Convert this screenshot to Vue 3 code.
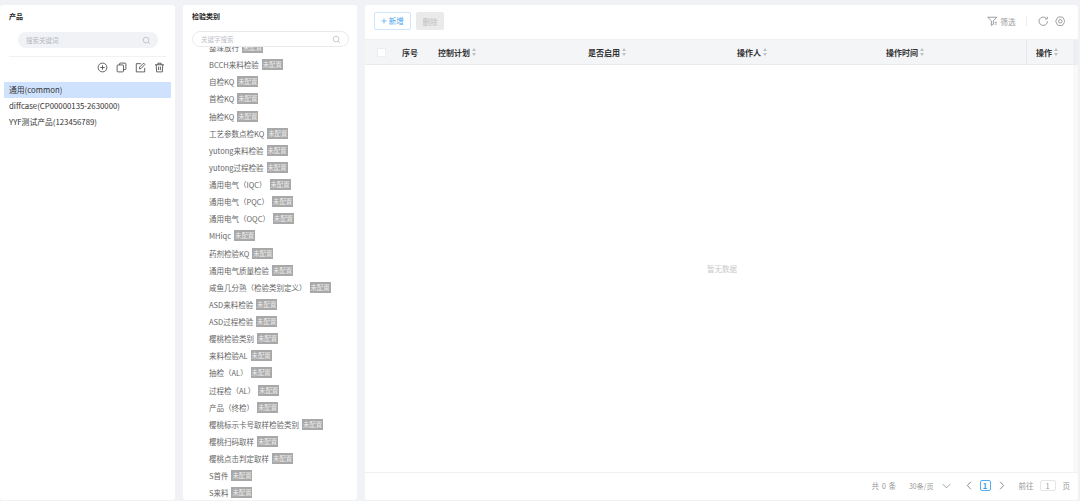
<script setup>
const products = ['通用(common)', 'diffcase(CP00000135-2630000)', 'YYF测试产品(123456789)']
const cats = [
  '整垛放行', 'BCCH来料检验', '自检KQ', '首检KQ', '抽检KQ', '工艺参数点检KQ',
  'yutong来料检验', 'yutong过程检验', '通用电气（IQC）', '通用电气（PQC）', '通用电气（OQC）',
  'MHiqc', '药剂检验KQ', '通用电气质量检验', '咸鱼几分熟（检验类别定义）', 'ASD来料检验',
  'ASD过程检验', '樱桃检验类别', '来料检验AL', '抽检（AL）', '过程检（AL）', '产品（终检）',
  '樱桃标示卡号取样检验类别', '樱桃扫码取样', '樱桃点击判定取样', 'S首件', 'S来料'
]
const cols = [
  { t: '控制计划', w: 150 }, { t: '是否启用', w: 149 }, { t: '操作人', w: 149 }, { t: '操作时间', w: 140 }
]
</script>

<template>
  <div class="page">
    <section class="panel left">
      <h3 class="title">产品</h3>
      <div class="search-grey">
        <span>搜索关键词</span>
        <svg class="ic-s" viewBox="0 0 12 12"><circle cx="5.4" cy="5.4" r="3.8" /><path d="M8.2 8.2 10.6 10.6" /></svg>
      </div>
      <div class="tools">
        <svg viewBox="0 0 12 12"><circle cx="6" cy="6" r="4.8" /><path d="M3.6 6h4.8M6 3.6v4.8" /></svg>
        <svg viewBox="0 0 12 12"><rect x="1.2" y="3.2" width="7" height="7.6" rx="1" /><path d="M3.8 3V2.2a1 1 0 0 1 1-1h5a1 1 0 0 1 1 1v5.2a1 1 0 0 1-1 1h-1.400" /></svg>
        <svg viewBox="0 0 12 12"><path d="M10.600 6.400v4.400H1.400V1.800h5" /><path d="M4.800 7.400 5 5.600 9.400 1.200l1.400 1.400-4.200 4.600z" /></svg>
        <svg viewBox="0 0 12 12"><path d="M1.200 3h9.600M4.200 3V1.300h3.600V3M2.400 3l.5 7.800h6.200L9.600 3M5 5v3.800M7 5v3.800" /></svg>
      </div>
      <ul class="prod">
        <li v-for="(p, i) in products" :key="p" :class="{ on: i === 0 }">{{ p }}</li>
      </ul>
    </section>

    <section class="panel mid">
      <h3 class="title mt">检验类别</h3>
      <div class="search-line">
        <span>关键字搜索</span>
        <svg class="ic-s" viewBox="0 0 12 12"><circle cx="5.4" cy="5.4" r="3.8" /><path d="M8.2 8.2 10.6 10.6" /></svg>
      </div>
      <ul class="cats">
        <li v-for="c in cats" :key="c">
          <span class="nm">{{ c }}</span><span class="tag">未配置</span>
        </li>
      </ul>
    </section>

    <section class="panel main">
      <div class="bar">
        <button class="add"><svg class="plus" viewBox="0 0 8 8"><path d="M4 .5v7M.5 4h7" /></svg>新增</button>
        <button class="del">删除</button>
        <div class="bar-r">
          <svg class="b-ic" viewBox="0 0 12 12"><path d="M.8 1.400h10.400L7.200 5.600v4L5 10.800V5.600z" /><path d="M8.800 7.200h2.400M8.800 9.200h2.400" /></svg>
          <span class="filter">筛选</span>
          <i class="sep"></i>
          <svg class="b-ic" viewBox="0 0 12 12"><path d="M10.800 6A4.800 4.800 0 1 1 9.300 2.500" /><path d="M10.600 .8v2.600H8" /></svg>
          <svg class="b-ic" viewBox="0 0 12 12"><path d="M3.800 1.200h4.400a1 1 0 0 1 .8.500l2 3.800a1 1 0 0 1 0 1L9 10.300a1 1 0 0 1-.8.500H3.800a1 1 0 0 1-.8-.5L1 6.500a1 1 0 0 1 0-1L3 1.700a1 1 0 0 1 .8-.5z" /><circle cx="6" cy="6" r="2" /></svg>
        </div>
      </div>
      <div class="thead">
        <div class="cell-c"><i class="cb"></i></div>
        <div class="cell-n">序号</div>
        <div v-for="c in cols" :key="c.t" class="cell" :style="{ width: c.w + 'px' }">
          {{ c.t }}<span class="sort"><b></b><em></em></span>
        </div>
        <div class="cell fix">操作<span class="sort"><b></b><em></em></span></div>
        <div class="gut"></div>
      </div>
      <div class="tbody">暂无数据</div>
      <div class="pager">
        <span class="total">共 0 条</span>
        <span class="size">30条/页</span>
        <svg class="chev" viewBox="0 0 12 8"><path d="M1 1.500 6 6.500l5-5" /></svg>
        <svg class="arr l" viewBox="0 0 8 12"><path d="M6.500 1 1.800 6l4.700 5" /></svg>
        <span class="cur">1</span>
        <svg class="arr r" viewBox="0 0 8 12"><path d="M1.500 1 6.200 6l-4.700 5" /></svg>
        <span class="goto">前往</span>
        <span class="inp">1</span>
        <span>页</span>
      </div>
    </section>
  </div>
</template>

<style>
html, body { margin: 0; background: #f1f2f5; }
</style>

<style scoped>
.page {
  display: flex;
  gap: 8px;
  width: 1080px;
  height: 501px;
  box-sizing: border-box;
  padding: 5px 2px 1px 0;
  background: #f1f2f5;
  overflow: hidden;
  font-family: "Noto Sans CJK SC", "Noto Sans", sans-serif;
  font-size: 7.5px;
  color: #333;
}
.panel {
  background: #fff;
  border-radius: 3px;
  box-sizing: border-box;
  overflow: hidden;
}
.left { width: 175px; }
.mid { width: 174px; display: flex; flex-direction: column; }
.main { flex: 1; display: flex; flex-direction: column; }
.title {
  margin: 0;
  padding: 6px 0 0 9px;
  height: 19px;
  box-sizing: border-box;
  font-size: 7px;
  line-height: 11px;
  font-weight: 700;
  color: #222;
}
.title.mt { height: 26px; }
.search-grey {
  margin: 8px 0 0 18px;
  width: 140px;
  height: 16px;
  border-radius: 8px;
  background: #f0f2f5;
  display: flex;
  align-items: center;
  justify-content: space-between;
  padding: 0 7px 0 8px;
  box-sizing: border-box;
  font-size: 6.5px;
  color: #b4b8bf;
}
.ic-s { width: 9px; height: 9px; fill: none; stroke: #b5b9c0; stroke-width: 1; }
.tools {
  margin: 8px 9px 0;
  border-top: 1px solid #f0f1f3;
  padding: 5px 1px 0 0;
  height: 16px;
  display: flex;
  justify-content: flex-end;
  gap: 8px;
}
.tools svg { width: 11px; height: 11px; fill: none; stroke: #444; stroke-width: .9; }
.prod { list-style: none; margin: 4px 4px 0; padding: 0; }
.prod li {
  height: 16px;
  line-height: 16px;
  padding-left: 5px;
  font-size: 7.8px;
  color: #333;
  white-space: nowrap;
}
.prod li.on { background: #cfe2fd; border-radius: 1px; }
.search-line {
  margin: 0 8px 0 9px;
  height: 16px;
  flex: none;
  border: 1px solid #e8eaee;
  border-radius: 8px;
  display: flex;
  align-items: center;
  justify-content: space-between;
  padding: 0 7px 0 8px;
  box-sizing: border-box;
  font-size: 6.5px;
  color: #bcc0c6;
}
.cats {
  list-style: none;
  margin: 0;
  padding: 0 0 0 26px;
  flex: 1;
  overflow: hidden;
}
.cats li {
  height: 17.14px;
  line-height: 17.14px;
  white-space: nowrap;
  color: #666;
  font-size: 7.5px;
  display: flex;
  align-items: center;
}
.cats li:first-child { margin-top: -8px; }
.tag {
  margin-left: 3px;
  height: 11px;
  line-height: 11px;
  width: 21px;
  text-align: center;
  background: #a8a8a8;
  color: #eee;
  font-size: 6.4px;
  flex: none;
}
.bar {
  height: 34px;
  flex: none;
  display: flex;
  align-items: center;
  padding: 0 13px 2px 9px;
  gap: 5px;
  box-sizing: border-box;
}
button { font-family: inherit; padding: 0; }
.add {
  width: 37px;
  height: 18px;
  background: #fff;
  border: 1px solid #cfe6fb;
  border-radius: 2px;
  color: #4aa3ee;
  font-size: 7.5px;
  line-height: 16px;
  display: flex;
  align-items: center;
  justify-content: center;
  gap: 1.5px;
}
.plus { width: 6px; height: 6px; fill: none; stroke: #4aa3ee; stroke-width: .9; }
.del {
  width: 28px;
  height: 18px;
  background: #eaeaea;
  border: 0;
  border-radius: 2px;
  color: #bdbdbd;
  font-size: 7.5px;
}
.bar-r { margin-left: auto; display: flex; align-items: center; color: #999; font-size: 7.5px; }
.b-ic { width: 10.5px; height: 10.5px; fill: none; stroke: #777; stroke-width: .8; }
.filter { margin-left: 3.5px; color: #999; }
.sep { width: 1px; height: 10px; background: #eee; margin: 0 11px 0 10px; }
.bar-r .b-ic + .b-ic { margin-left: 6.5px; }
.thead {
  height: 26px;
  flex: none;
  display: flex;
  align-items: center;
  background: #f4f5f7;
  border-top: 1px solid #eef0f2;
  border-bottom: 1px solid #e9ebee;
  box-sizing: border-box;
  font-size: 8px;
  font-weight: 700;
  color: #333;
}
.cell-c { width: 37px; padding-left: 12px; box-sizing: border-box; display: flex; flex: none; }
.cb { width: 9px; height: 9px; background: #fff; border: 1px solid #eceef1; box-sizing: border-box; }
.cell-n { width: 36px; flex: none; }
.cell { display: flex; align-items: center; height: 100%; flex: none; }
.fix {
  width: 47px;
  box-sizing: border-box;
  padding-left: 9px;
  border-left: 1px solid #e6e8eb;
}
.gut { flex: 1; height: 100%; background: #eceef0; }
.sort { display: inline-flex; flex-direction: column; gap: 1.5px; margin-left: 2px; }
.sort b, .sort em {
  display: block;
  width: 0;
  height: 0;
  border-left: 2.5px solid transparent;
  border-right: 2.5px solid transparent;
}
.sort b { border-bottom: 3px solid #bcc0c6; }
.sort em { border-top: 3px solid #bcc0c6; }
.tbody {
  flex: 1;
  display: flex;
  align-items: center;
  justify-content: center;
  color: #c9c9c9;
  font-size: 7.5px;
  padding: 0 0 0 6px;
  border-right: 5px solid #f9f9fa;
}
.pager {
  height: 28px;
  flex: none;
  border-top: 1px solid #eef0f2;
  display: flex;
  align-items: center;
  justify-content: flex-end;
  padding: 0 8px 2px 0;
  font-size: 7.5px;
  color: #999;
  box-sizing: border-box;
}
.total { word-spacing: 1px; }
.size { margin-left: 13px; font-size: 7px; }
.chev { width: 9px; height: 6px; margin-left: 8px; fill: none; stroke: #888; stroke-width: 1; }
.arr { width: 6px; height: 9px; fill: none; stroke: #666; stroke-width: 1; }
.arr.l { margin-left: 15px; }
.arr.r { margin-left: 8px; }
.cur {
  margin-left: 8px;
  width: 11px;
  height: 11px;
  line-height: 9px;
  text-align: center;
  box-sizing: border-box;
  border: 1px solid #56aef2;
  border-radius: 2px;
  color: #3b9bea;
  font-weight: 700;
}
.goto { margin-left: 14px; }
.inp {
  margin: 0 7px 0 6px;
  width: 16px;
  height: 11px;
  line-height: 9px;
  text-align: center;
  box-sizing: border-box;
  border: 1px solid #e4e6ea;
  border-radius: 2px;
}
</style>
